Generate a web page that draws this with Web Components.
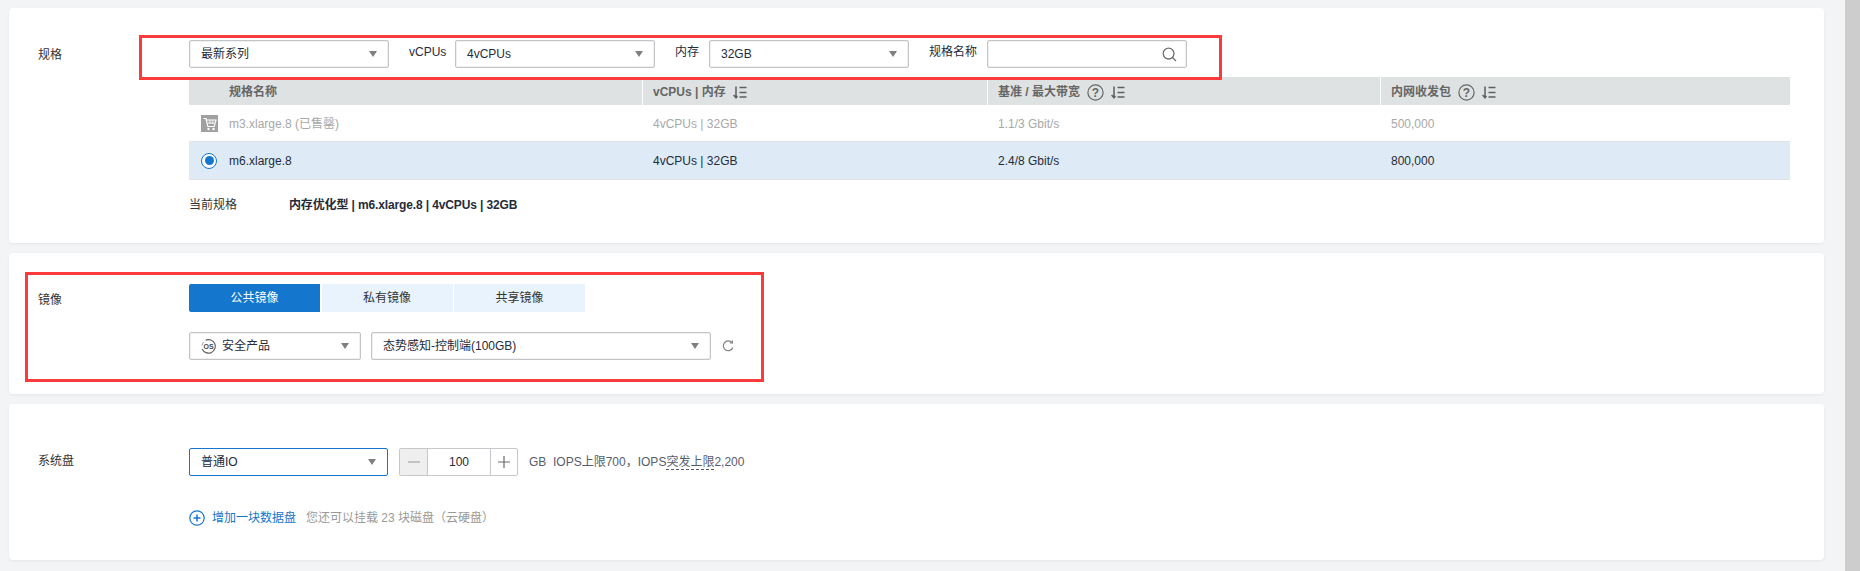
<!DOCTYPE html>
<html lang="zh">
<head>
<meta charset="utf-8">
<title>规格</title>
<style>
  html, body { margin: 0; height: 100%; overflow: hidden; }
  body {
    display: flex;
    height: 571px;
    background: #f3f4f6;
    font: 12px/18px "Liberation Sans", "Noto Sans CJK SC", sans-serif;
    color: #252b3a;
  }
  main { flex: 1; padding: 8px 21px 0 9px; display: flex; flex-direction: column; gap: 10px; }
  .scrollbar { width: 15px; background: #cdcdcd; }
  .inline { display: flex; align-items: center; }
  .filters .cap { line-height: 18px; position: relative; top: -2px; }
  .tabs-row { margin-bottom: 20px; }
  .image-row { gap: 10px; }
  .disk-row { gap: 11px; }
  .add-row { margin-top: 28px; height: 28px; }
</style>
</head>
<body>
<main>
  <form-card label="规格" style="height:235px" pad="32" nudge="1">
    <note-box style="left:130px;top:27px;width:1083px;height:45px"></note-box>
    <div class="inline filters">
      <drop-select style="width:200px">最新系列</drop-select>
      <span class="cap" style="margin-left:20px;width:46px">vCPUs</span>
      <drop-select style="width:200px">4vCPUs</drop-select>
      <span class="cap" style="margin-left:20px;width:34px">内存</span>
      <drop-select style="width:200px">32GB</drop-select>
      <span class="cap" style="margin-left:20px;width:58px">规格名称</span>
      <search-box style="width:200px"></search-box>
    </div>
    <spec-table></spec-table>
    <current-spec></current-spec>
  </form-card>

  <form-card label="镜像" style="height:141px" pad="31" nudge="2">
    <note-box style="left:16px;top:19px;width:739px;height:110px"></note-box>
    <div class="tabs-row"><image-tabs></image-tabs></div>
    <div class="inline image-row">
      <drop-select style="width:172px"><os-icon slot="icon"></os-icon>安全产品</drop-select>
      <drop-select style="width:340px">态势感知-控制端(100GB)</drop-select>
      <refresh-icon></refresh-icon>
    </div>
  </form-card>

  <form-card label="系统盘" style="height:156px" pad="44" nudge="-1">
    <div class="inline disk-row">
      <drop-select style="width:199px" focused>普通IO</drop-select>
      <num-stepper value="100"></num-stepper>
      <disk-note></disk-note>
    </div>
    <div class="inline add-row"><add-disk></add-disk></div>
  </form-card>
</main>
<div class="scrollbar"></div>

<script>
const sortIcon = `<svg width="14" height="13" viewBox="0 0 14 13" fill="none" stroke="#5f5f5f" stroke-width="1.5"><path d="M3 0.5V11.5M0.6 9L3 11.8L4.4 10"/><path d="M6.5 1.5H13.5M6.5 6.5H13.5M6.5 11H13.5"/></svg>`
const helpIcon = `<svg width="17" height="17" viewBox="0 0 17 17"><circle cx="8.5" cy="8.5" r="7.6" fill="none" stroke="#666" stroke-width="1.2"/><text x="8.5" y="12.6" text-anchor="middle" font-size="12" fill="#666">?</text></svg>`

class FormCard extends HTMLElement {
  constructor() {
    super()
    const nudge = Number(this.getAttribute('nudge') || 0)
    this.attachShadow({ mode: 'open' }).innerHTML = `
    <style>
      :host { display: block; position: relative; background: #fff; border-radius: 4px; box-shadow: 0 1px 3px rgba(0,0,0,.06); box-sizing: border-box; }
      .wrap { display: grid; grid-template-columns: 151px 1fr; padding: ${this.getAttribute('pad')}px 34px 0 29px; }
      .label { color: #333; line-height: 28px; margin-top: ${nudge}px; }
    </style>
    <div class="wrap"><div class="label">${this.getAttribute('label')}</div><div><slot></slot></div></div>`
  }
}

class NoteBox extends HTMLElement {
  constructor() {
    super()
    this.attachShadow({ mode: 'open' }).innerHTML = `
    <style>:host { display: block; position: absolute; box-sizing: border-box; border: 3px solid #fb3a3a; z-index: 2; pointer-events: none; }</style>`
  }
}

class DropSelect extends HTMLElement {
  constructor() {
    super()
    this.attachShadow({ mode: 'open' }).innerHTML = `
    <style>
      :host { display: flex; align-items: center; height: 28px; box-sizing: border-box; flex: none; background: #fff; border: 1px solid #c2c4c8; border-radius: 2px; box-shadow: inset 0 0 0 1px #f0f0f0; padding: 0 11px 0 11px; color: #252b3a; }
      :host([focused]) { border-color: #1476cc; box-shadow: none; }
      .txt { flex: 1; white-space: nowrap; }
      .arrow { width: 0; height: 0; border: 4px solid transparent; border-top: 6px solid #7f7f7f; border-bottom: 0; }
      ::slotted([slot=icon]) { margin-right: 6px; }
    </style>
    <slot name="icon"></slot><span class="txt"><slot></slot></span><span class="arrow"></span>`
  }
}

class SearchBox extends HTMLElement {
  constructor() {
    super()
    this.attachShadow({ mode: 'open' }).innerHTML = `
    <style>
      :host { display: flex; align-items: center; justify-content: flex-end; height: 28px; box-sizing: border-box; flex: none; border: 1px solid #c2c4c8; border-radius: 2px; box-shadow: inset 0 0 0 1px #f0f0f0; padding-right: 9px; }
      svg { display: block; }
    </style>
    <svg width="15" height="15" viewBox="0 0 15 15" fill="none" stroke="#6e6e6e" stroke-width="1.3"><circle cx="6.6" cy="6.6" r="5.4"/><path d="M10.5 10.5L14 14"/></svg>`
  }
}

class SpecTable extends HTMLElement {
  constructor() {
    super()
    this.attachShadow({ mode: 'open' }).innerHTML = `
    <style>
      :host { display: block; margin-top: 9px; }
      .row { display: grid; grid-template-columns: 453px 345px 393px 410px; align-items: center; }
      .head { height: 28px; background: #dfe2e3; color: #666; font-weight: 700; }
      .head > div { height: 28px; box-sizing: border-box; display: flex; align-items: center; gap: 7px; padding: 2px 0 0 10px; border-left: 1px solid #fff; }
      .head > div:first-child { border-left: 0; padding-left: 40px; }
      .body { height: 37px; border-bottom: 1px solid #e0e2e6; box-sizing: border-box; }
      .body > div { padding-left: 11px; }
      .body > .first { padding-left: 12px; display: flex; align-items: center; gap: 11px; }
      .off { color: #a8a8a8; }
      .off > div:not(.first), .off .first span { padding-top: 2px; }
      .on { background: #deebf6; height: 38px; color: #252b3a; }
      .box { width: 17px; height: 17px; display: block; }
      .radio { width: 16px; height: 16px; box-sizing: border-box; border: 1px solid #1476cc; border-radius: 50%; background: #fff; display: flex; align-items: center; justify-content: center; margin-right: 1px; }
      .radio i { width: 9px; height: 9px; border-radius: 50%; background: #1476cc; }
    </style>
    <div class="row head">
      <div>规格名称</div>
      <div>vCPUs | 内存 ${sortIcon}</div>
      <div>基准 / 最大带宽 ${helpIcon} ${sortIcon}</div>
      <div>内网收发包 ${helpIcon} ${sortIcon}</div>
    </div>
    <div class="row body off">
      <div class="first">
        <svg class="box" viewBox="0 0 17 17"><rect width="17" height="17" fill="#a0a0a0"/><path d="M2.5 3.5H5L6.8 11.5H13.2L15 5H5.6" fill="none" stroke="#fff" stroke-width="1.2"/><path d="M9 5V9M11.8 5V9M7 8H13" fill="none" stroke="#fff" stroke-width=".9"/><circle cx="7.5" cy="14" r="1.2" fill="#fff"/><circle cx="12.5" cy="14" r="1.2" fill="#fff"/></svg>
        <span>m3.xlarge.8 (已售罄)</span>
      </div>
      <div>4vCPUs | 32GB</div>
      <div>1.1/3 Gbit/s</div>
      <div>500,000</div>
    </div>
    <div class="row body on">
      <div class="first"><span class="radio"><i></i></span><span>m6.xlarge.8</span></div>
      <div>4vCPUs | 32GB</div>
      <div>2.4/8 Gbit/s</div>
      <div>800,000</div>
    </div>`
  }
}

class CurrentSpec extends HTMLElement {
  constructor() {
    super()
    this.attachShadow({ mode: 'open' }).innerHTML = `
    <style>
      :host { display: grid; grid-template-columns: 100px 1fr; margin-top: 16px; color: #333; }
      b { color: #252b3a; letter-spacing: -.13px; }
    </style>
    <span>当前规格</span><b>内存优化型 | m6.xlarge.8 | 4vCPUs | 32GB</b>`
  }
}

class ImageTabs extends HTMLElement {
  constructor() {
    super()
    this.attachShadow({ mode: 'open' }).innerHTML = `
    <style>
      :host { display: flex; gap: 1.5px; }
      div { width: 131px; height: 28px; line-height: 28px; text-align: center; background: #e8f3fd; color: #333; }
      .on { background: #1476cc; color: #fff; border-radius: 2px 0 0 2px; }
    </style>
    <div class="on">公共镜像</div><div>私有镜像</div><div>共享镜像</div>`
  }
}

class OsIcon extends HTMLElement {
  constructor() {
    super()
    this.attachShadow({ mode: 'open' }).innerHTML = `
    <style>:host { display: block; width: 15px; height: 15px; } svg { display: block; }</style>
    <svg width="15" height="15" viewBox="0 0 15 15"><path d="M4.6 1.2A6.8 6.8 0 1 1 1.2 10" fill="none" stroke="#666" stroke-width="1.2"/><path d="M1 6.4A6.6 6.6 0 0 1 2.6 3" fill="none" stroke="#999" stroke-width="1"/><text x="7.5" y="10" text-anchor="middle" font-size="7" font-weight="700" fill="#444">OS</text></svg>`
  }
}

class RefreshIcon extends HTMLElement {
  constructor() {
    super()
    this.attachShadow({ mode: 'open' }).innerHTML = `
    <style>:host { display: block; width: 12px; height: 12px; margin-left: 1px; } svg { display: block; }</style>
    <svg width="12" height="12" viewBox="0 0 12 12" fill="none" stroke="#808080" stroke-width="1.2"><path d="M10 2.6A4.9 4.9 0 1 0 10.8 7.5"/><path d="M10.4 0.4V3H7.8"/></svg>`
  }
}

class NumStepper extends HTMLElement {
  constructor() {
    super()
    this.attachShadow({ mode: 'open' }).innerHTML = `
    <style>
      :host { display: flex; height: 28px; width: 119px; box-sizing: border-box; flex: none; border: 1px solid #c6c8cc; border-radius: 2px; }
      div { display: flex; align-items: center; justify-content: center; }
      .m { width: 27px; background: #efefef; border-right: 1px solid #c6c8cc; }
      .v { flex: 1; }
      .p { width: 26px; border-left: 1px solid #c6c8cc; }
    </style>
    <div class="m"><svg width="12" height="12" stroke="#a5a5a5" stroke-width="1.2"><path d="M0 6H12"/></svg></div>
    <div class="v">${this.getAttribute('value')}</div>
    <div class="p"><svg width="12" height="12" stroke="#6a6a6a" stroke-width="1.2"><path d="M0 6H12M6 0V12"/></svg></div>`
  }
}

class DiskNote extends HTMLElement {
  constructor() {
    super()
    this.attachShadow({ mode: 'open' }).innerHTML = `
    <style>
      :host { display: block; color: #575d6c; white-space: nowrap; }
      u { text-decoration: none; border-bottom: 1px dashed #575d6c; }
    </style>
    GB&nbsp; IOPS上限700，IOPS<u>突发上限</u>2,200`
  }
}

class AddDisk extends HTMLElement {
  constructor() {
    super()
    this.attachShadow({ mode: 'open' }).innerHTML = `
    <style>
      :host { display: flex; align-items: center; white-space: nowrap; }
      svg { display: block; margin-right: 7px; }
      a { color: #1476cc; margin-right: 10px; }
      span { color: #9a9a9a; }
    </style>
    <svg width="16" height="16" viewBox="0 0 16 16" fill="none" stroke="#1476cc" stroke-width="1.2"><circle cx="8" cy="8" r="7.2"/><path d="M4.5 8H11.5M8 4.5V11.5" stroke-width="1.5"/></svg>
    <a>增加一块数据盘</a><span>您还可以挂载 23 块磁盘（云硬盘）</span>`
  }
}

customElements.define('form-card', FormCard)
customElements.define('note-box', NoteBox)
customElements.define('drop-select', DropSelect)
customElements.define('search-box', SearchBox)
customElements.define('spec-table', SpecTable)
customElements.define('current-spec', CurrentSpec)
customElements.define('image-tabs', ImageTabs)
customElements.define('os-icon', OsIcon)
customElements.define('refresh-icon', RefreshIcon)
customElements.define('num-stepper', NumStepper)
customElements.define('disk-note', DiskNote)
customElements.define('add-disk', AddDisk)
</script>
</body>
</html>
